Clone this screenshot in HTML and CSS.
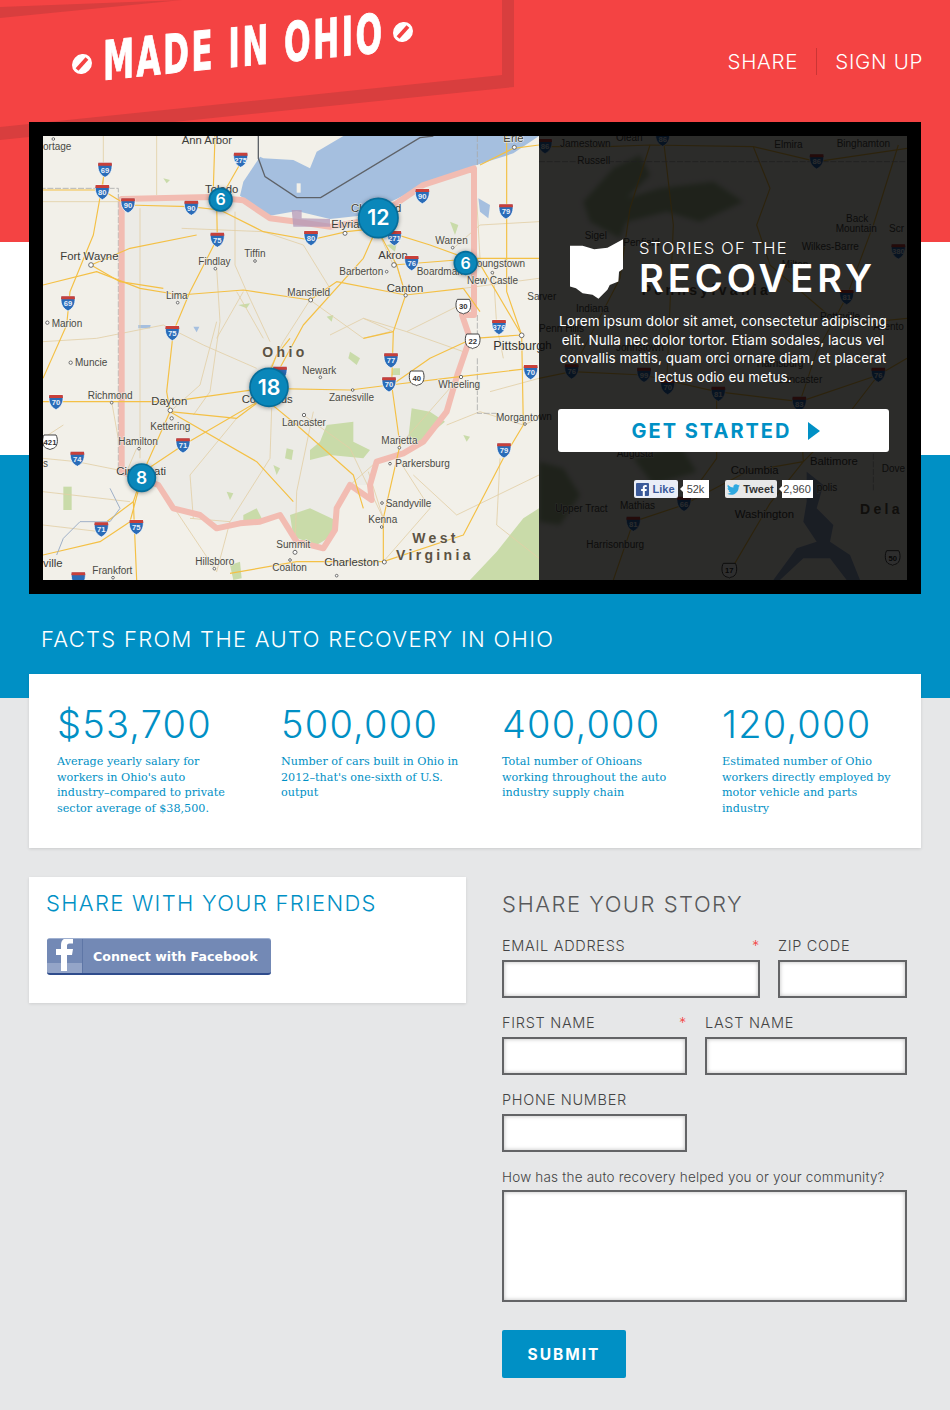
FILE: index.html
```html
<!DOCTYPE html>
<html>
<head>
	<title>Made in Ohio</title>
	<link rel="stylesheet" href="styles.css">
</head>
<body>
<div class="page">

<svg class="ribbon" viewBox="0 0 520 145" width="520" height="145" aria-hidden="true">
  <polygon points="0,7 182,0 0,18" class="ribbon-band"/>
  <polygon points="502,0 514,0 514,87 0,140 0,127 502,75" class="ribbon-band"/>
</svg>

<header class="header">
  <div class="logo">
    <span class="logo-dot"></span>
    <span class="logo-text">MADE IN OHIO</span>
    <span class="logo-dot"></span>
  </div>
  <nav class="nav">
    <a href="#">SHARE</a>
    <span class="nav-sep"></span>
    <a href="#">SIGN UP</a>
  </nav>
</header>

<section class="hero">
  <div class="map">
    <svg viewBox="39 33 1488 1332" width="496" height="444">
      <defs>
        <g id="is">
          <path d="M-20,-20 H20 C23,-4 20,14 0,24 C-20,14 -23,-4 -20,-20 Z" fill="#2a6cb8" stroke="#fff" stroke-width="2"/>
          <path d="M-20,-20 H20 L21,-11 H-21 Z" fill="#c8403a"/>
        </g>
        <g id="us">
          <path d="M-18,-20 H18 C24,-10 24,10 14,18 C8,22 3,21 0,24 C-3,21 -8,22 -14,18 C-24,10 -24,-10 -18,-20 Z" fill="#fff" stroke="#444" stroke-width="3"/>
        </g>
      </defs>
      <rect x="39" y="33" width="1488" height="1332" fill="#f2f0e9"/>
      <path d="M275,1040 V222 L540,216 L640,226 L720,280 L800,290 L900,305 L990,290 L1100,235 L1180,180 L1332,130 V570 H1296 L1320,640 L1282,750 L1250,860 L1180,950 L1120,985 L1040,1010 L1020,1080 L960,1080 L920,1150 L915,1215 L880,1270 L800,1250 L750,1170 L690,1190 L630,1195 L560,1210 L510,1170 L430,1150 L385,1080 Z" fill="#ecebe6"/>

      <g class="parks">
        <polygon points="890,900 970,890 970,950 1020,975 1000,1000 900,990 840,1005 840,975 870,950"/>
        <polygon points="780,1170 840,1150 915,1185 910,1230 860,1260 790,1235"/>
        <polygon points="640,1170 680,1150 700,1190 640,1200"/>
        <polygon points="1145,850 1200,860 1245,890 1160,960 1135,940"/>
        <polygon points="100,1085 125,1085 125,1155 100,1155"/>
        <polygon points="1320,1365 1400,1280 1480,1180 1527,1150 1527,1365"/>
        <polygon points="960,680 990,700 980,720 955,700"/>
        <polygon points="1090,730 1110,730 1110,750 1085,750"/>
        <polygon points="600,1320 630,1310 635,1360 610,1365"/>
        <polygon points="625,540 660,535 650,550"/>
        <polygon points="890,575 910,570 905,590"/>
        <polygon points="1260,290 1285,300 1275,330"/>
        <polygon points="1070,360 1100,355 1095,380"/>
        <polygon points="770,970 790,975 785,1005 765,1000"/>
        <polygon points="590,1100 610,1105 600,1125"/>
        <polygon points="730,1020 750,1030 740,1050"/>
        <polygon points="400,160 420,165 410,175"/>
        <polygon points="1300,930 1320,935 1310,950"/>
      </g>

      <polygon class="water" points="690,95 640,170 630,212 720,272 800,258 900,282 990,272 1100,222 1200,170 1340,120 1450,85 1527,33 940,33 860,80 840,130 790,105 700,100"/>
      <polygon class="water" points="325,600 362,600 360,610 325,610"/>
      <polygon class="water" points="490,605 508,605 500,622"/>
      <polygon class="water" points="1345,220 1380,240 1375,280 1350,260"/>
      <rect x="800" y="175" width="12" height="28" fill="#f2f0e9"/>

      <g class="road-minor">
        <path d="M220,33 V190 M380,33 V210 M330,250 V1000 M39,230 H270 M615,260 V420 L650,500 L720,650"/>
        <path d="M455,310 L700,320 L820,360 L900,490 M560,430 L570,590 L540,800 L490,870"/>
        <path d="M39,650 L200,640 L400,600 L520,660 L680,730 M700,640 L620,500 M840,525 L760,650 L720,730"/>
        <path d="M900,630 L1000,580 L1130,620 L1290,540 M1000,580 L1090,620 M820,870 L960,970 L1060,1180 M725,850 L720,1000 L600,1190 L480,1180"/>
        <path d="M420,860 L510,780 L560,590 M320,970 L290,1040 M620,880 L480,1050 L490,1180 M245,830 L270,970 M100,900 L39,940"/>
        <path d="M1340,220 L1350,400 M1390,440 L1400,600 L1420,700 M1250,900 L1350,860 L1480,900 M1480,900 L1527,880 M1110,960 L1290,755"/>
        <path d="M1090,420 L1040,310 M1100,420 L1127,510 M1270,370 L1350,300 L1527,290 M1300,490 L1527,460 M1060,1180 L1015,1040"/>
        <path d="M39,1000 L140,1010 L290,1040 M39,1100 L300,1130 M39,1200 L210,1220 M400,1100 L560,1340 M600,1190 L560,1340 M850,860 L800,1100 L795,1280"/>
        <path d="M840,525 L1000,640 L1080,620 M1130,620 L1300,680 M640,500 L560,640 M1150,1050 L1280,1170 L1527,1050 M1380,800 L1527,760"/>
        <path d="M1040,1010 L960,1080 M1110,1010 L1200,1150 L1060,1310 M1410,1000 L1400,1200 L1527,1300"/>
      </g>

      <g class="state-line">
        <path d="M265,1030 V190 H39 M1342,33 V120 M1342,570 V640 M1342,700 V865 H1400"/>
      </g>
      <path class="ohio-border" d="M275,1040 V222 L540,216 L640,226 L720,280 L800,290 L900,305 L990,290 L1100,235 L1180,180 L1332,130 V570 H1296 L1320,640 L1282,750 L1250,860 L1180,950 L1120,985 L1040,1010 L1020,1080 L1025,1125 L960,1080 L920,1150 L915,1215 L880,1270 L800,1250 L750,1170 L690,1190 L630,1195 L560,1210 L510,1170 L430,1150 L385,1080 Z"/>
      <path d="M785,255 H815 V280 L900,282 V305 H790 Z" fill="#b49ab8" opacity=".75"/>

      <g class="road">
        <path d="M39,195 H217 L290,240 L480,245 L570,255 L700,320 L840,345 L950,320 L1040,310 L1200,360 L1310,400 H1527"/>
        <path d="M640,100 L560,240 L562,340 L480,500 L430,620 L410,800 L420,860 L340,1040 L310,1130 L320,1365"/>
        <path d="M39,830 H420 L700,790 L960,795 L1080,780 L1290,755 L1500,730"/>
        <path d="M340,1040 L460,960 L700,820 L820,600 L1000,400 L1040,310"/>
        <path d="M1127,510 L1090,620 L1085,780 L1110,960 L1060,1180 L1060,1310"/>
        <path d="M39,480 L200,440 L330,490 L450,510 L640,495 L840,525 L920,470 L1127,510 L1300,490"/>
        <path d="M225,133 L190,330 L120,500 L110,600 L39,760"/>
        <path d="M1430,33 V500 L1475,630 L1480,900 L1420,1000 L1300,1230 L1060,1310 L800,1310 L600,1345"/>
        <path d="M1090,420 L1280,405 M1340,400 L1475,630 L1330,640 L1200,700 L1085,780"/>
        <path d="M715,830 L800,900 L970,1050 L1000,1150 M420,860 L680,1010 L790,1130 M183,420 L270,470 L400,490 M183,420 L300,370 L500,330"/>
        <path d="M340,1040 L300,1190 L210,1250 L39,1290 M310,1130 L230,1190 M555,33 L550,190 M1527,60 L1450,70 L1350,120"/>
        <path d="M700,790 L740,690 L780,640 M420,860 L620,880 L700,820 M1000,640 L1090,620 M1300,490 L1350,560 M1040,310 L1100,420 L1127,510"/>
      </g>
      <path d="M240,1090 L270,1150 L240,1190 L150,1190 L100,1240 L80,1290" fill="none" stroke="#9fb0c8" stroke-width="3"/>
      <path class="border-line" d="M685,33 V100 L705,155 L800,218 H872 L1170,38 L1210,33"/>

      <g class="lbl">
        <text x="455" y="56" class="lbl-lg">Ann Arbor</text><text x="39" y="75">ortage</text><text x="1420" y="52" class="lbl-lg">Erie</text>
        <text x="525" y="205" class="lbl-lg">Toledo</text><text x="963" y="260" class="lbl-lg">Cleveland</text><text x="904" y="310" class="lbl-lg">Elyria</text>
        <text x="1216" y="356">Warren</text><text x="91" y="404" class="lbl-lg">Fort Wayne</text><text x="643" y="397">Tiffin</text><text x="505" y="419">Findlay</text>
        <text x="1045" y="403" class="lbl-lg">Akron</text><text x="928" y="451">Barberton</text><text x="1160" y="449">Boardman</text><text x="1340" y="425">oungstown</text><text x="1311" y="476">New Castle</text>
        <text x="1070" y="500" class="lbl-lg">Canton</text><text x="772" y="513">Mansfield</text><text x="408" y="521">Lima</text><text x="1492" y="524">Sarv</text><text x="65" y="605">Marion</text>
        <text x="1390" y="675" class="lbl-xl">Pittsburgh</text><text x="135" y="723">Muncie</text><text x="817" y="746">Newark</text>
        <text x="697" y="696" class="region">Ohio</text><text x="173" y="822">Richmond</text><text x="364" y="840" class="lbl-lg">Dayton</text><text x="897" y="828">Zanesville</text>
        <text x="635" y="833" class="lbl-lg">Columbus</text><text x="1225" y="790">Wheeling</text><text x="1398" y="887">Morgantown</text><text x="756" y="903">Lancaster</text>
        <text x="361" y="914">Kettering</text><text x="265" y="960">Hamilton</text><text x="1054" y="958">Marietta</text><text x="1096" y="1027">Parkersburg</text>
        <text x="259" y="1049" class="lbl-lg">Cincinnati</text><text x="39" y="1027">s</text><text x="1067" y="1145">Sandyville</text><text x="1015" y="1195">Kenna</text>
        <text x="1147" y="1254" class="region">West</text><text x="1098" y="1306" class="region">Virginia</text>
        <text x="739" y="1270">Summit</text><text x="496" y="1319">Hillsboro</text><text x="727" y="1339">Coalton</text><text x="883" y="1323" class="lbl-lg">Charleston</text>
        <text x="187" y="1347">Frankfort</text><text x="39" y="1325" class="lbl-lg">ville</text>
      </g>

      <g class="towns">
        <circle cx="183" cy="420" r="7"/><circle cx="52" cy="593" r="5"/><circle cx="122" cy="713" r="5"/><circle cx="245" cy="833" r="4"/><circle cx="421" cy="856" r="7"/><circle cx="425" cy="880" r="5"/><circle cx="327" cy="971" r="4"/>
        <circle cx="556" cy="431" r="4"/><circle cx="675" cy="408" r="4"/><circle cx="443" cy="533" r="4"/><circle cx="842" cy="525" r="6"/><circle cx="945" cy="325" r="6"/><circle cx="1092" cy="420" r="7"/><circle cx="1070" cy="440" r="4"/>
        <circle cx="1127" cy="511" r="5"/><circle cx="1268" cy="368" r="4"/><circle cx="1387" cy="443" r="4"/><circle cx="1475" cy="631" r="7"/><circle cx="871" cy="757" r="4"/><circle cx="968" cy="795" r="4"/><circle cx="822" cy="870" r="5"/>
        <circle cx="1293" cy="756" r="5"/><circle cx="1485" cy="897" r="4"/><circle cx="1108" cy="968" r="4"/><circle cx="1080" cy="1016" r="4"/><circle cx="1056" cy="1134" r="4"/><circle cx="1055" cy="1206" r="4"/><circle cx="795" cy="1282" r="6"/>
        <circle cx="780" cy="1305" r="4"/><circle cx="1063" cy="1311" r="6"/><circle cx="553" cy="1331" r="4"/><circle cx="920" cy="1352" r="4"/><circle cx="249" cy="1358" r="4"/><circle cx="1453" cy="67" r="6"/><circle cx="70" cy="42" r="4"/>
      </g>

      <g class="shield-num">
        <use href="#is" x="225" y="133"/><text x="225" y="143">69</text>
        <use href="#is" x="632" y="103"/><text x="632" y="113">275</text>
        <use href="#is" x="217" y="200"/><text x="217" y="210">80</text>
        <use href="#is" x="294" y="240"/><text x="294" y="250">90</text>
        <use href="#is" x="484" y="247"/><text x="484" y="257">90</text>
        <use href="#is" x="562" y="343"/><text x="562" y="353">75</text>
        <use href="#is" x="114" y="534"/><text x="114" y="544">69</text>
        <use href="#is" x="427" y="623"/><text x="427" y="633">75</text>
        <use href="#is" x="843" y="338"/><text x="843" y="348">80</text>
        <use href="#is" x="1177" y="212"/><text x="1177" y="222">90</text>
        <use href="#is" x="1428" y="258"/><text x="1428" y="268">79</text>
        <use href="#is" x="1145" y="413"/><text x="1145" y="423">76</text>
        <use href="#is" x="1093" y="338"/><text x="1093" y="348">271</text>
        <use href="#is" x="1407" y="605"/><text x="1407" y="615">376</text>
        <use href="#is" x="1083" y="705"/><text x="1083" y="715">77</text>
        <use href="#is" x="1077" y="777"/><text x="1077" y="787">70</text>
        <use href="#is" x="1502" y="740"/><text x="1502" y="750">70</text>
        <use href="#is" x="78" y="830"/><text x="78" y="840">70</text>
        <use href="#is" x="459" y="960"/><text x="459" y="970">71</text>
        <use href="#is" x="142" y="1000"/><text x="142" y="1010">74</text>
        <use href="#is" x="214" y="1212"/><text x="214" y="1222">71</text>
        <use href="#is" x="319" y="1205"/><text x="319" y="1215">75</text>
        <use href="#is" x="1422" y="975"/><text x="1422" y="985">79</text>
        <use href="#is" x="145" y="1362"/>
        <use href="#is" x="750" y="745"/>
      </g>
      <g class="shield-us">
        <use href="#us" x="1300" y="543"/><text x="1300" y="553">30</text>
        <use href="#us" x="1328" y="647"/><text x="1328" y="657">22</text>
        <use href="#us" x="1160" y="758"/><text x="1160" y="768">40</text>
        <use href="#us" x="60" y="950"/><text x="60" y="960">421</text>
      </g>

      <g class="cluster">
        <circle cx="572" cy="224" r="34"/><text x="572" y="241" class="cluster-sm">6</text>
        <circle cx="1045" cy="279" r="59"/><text x="1045" y="301">12</text>
        <circle cx="1307" cy="414" r="34"/><text x="1307" y="431" class="cluster-sm">6</text>
        <circle cx="717" cy="787" r="57"/><text x="717" y="809">18</text>
        <circle cx="335" cy="1058" r="41"/><text x="335" y="1076" class="cluster-md">8</text>
      </g>
    </svg>
  </div>

  <div class="intro">
    <svg class="intro-map" viewBox="-3 33 1104 1332" width="368" height="444" aria-hidden="true">
      <rect x="-3" y="33" width="1104" height="1332" fill="#f2f0e9"/>
      <g class="forest">
        <polygon points="130,230 220,130 300,90 330,150 260,220 360,190 520,170 610,230 480,290 380,260 260,290 240,340 150,290"/>
        <polygon points="-3,1010 70,1030 120,1110 60,1200 -3,1190"/>
        <polygon points="280,1000 420,960 470,1040 340,1080"/>
      </g>
      <path class="water-dark" d="M800,1040 L850,1080 L830,1150 L880,1200 L870,1250 L930,1290 L960,1365 L920,1365 L870,1300 L790,1300 L720,1365 L700,1365 L770,1270 L830,1250 L790,1190 L800,1130 Z"/>
      <g class="road">
        <path d="M-3,65 H200 L330,60 L640,65 L830,110 L1101,70 M640,65 L690,190 L650,300 L690,420 L900,600 L1101,580"/>
        <path d="M330,60 L270,250 L240,460 L95,740 M95,740 L-3,760 M95,740 L310,750 L530,800 L780,830 L1015,750 L1101,700"/>
        <path d="M530,800 L530,1000 L430,1140 L280,1190 L220,1365 M780,830 L790,1010 L690,1135 L570,1340 M1015,750 L900,900 L790,1010 L620,1040 L430,1140"/>
        <path d="M920,515 L830,680 L780,830 M920,515 L1000,300 L1075,60 M370,40 L400,300 L380,780"/>
      </g>
      <path class="state-line" d="M-3,110 H1101 M1000,940 V1100"/>
      <g class="lbl">
        <text x="60" y="66">Jamestown</text><text x="228" y="48">Olean</text><text x="112" y="118">Russell</text><text x="703" y="70">Elmira</text><text x="890" y="67">Binghamton</text>
        <text x="918" y="290">Back</text><text x="887" y="322">Mountain</text><text x="1047" y="320">Scr</text><text x="785" y="375">Wilkes-Barre</text><text x="134" y="342">Sigel</text><text x="-3" y="524">rver</text><text x="108" y="560">Indiana</text>
        <text x="-3" y="622">Penn Hills</text><text x="228" y="678">Johnstown</text><text x="-3" y="672" class="lbl-lg">gh</text><text x="650" y="725">Harrisburg</text><text x="715" y="775">Lancaster</text><text x="1000" y="615">Allento</text><text x="840" y="585">Pottsville</text>
        <text x="725" y="430">Milton</text><text x="250" y="362">Penfield</text><text x="305" y="510" class="region">Pennsylvania</text><text x="-3" y="885">wn</text><text x="230" y="995">Augusta</text>
        <text x="810" y="1019" class="lbl-lg">Baltimore</text><text x="572" y="1046" class="lbl-lg">Columbia</text><text x="1025" y="1040">Dove</text><text x="830" y="1098">polis</text><text x="46" y="1160">Upper Tract</text><text x="240" y="1153">Mathias</text>
        <text x="584" y="1180" class="lbl-lg">Washington</text><text x="960" y="1167" class="region">Dela</text><text x="139" y="1270">Harrisonburg</text>
      </g>
      <g class="shield-num">
        <use href="#is" x="15" y="62"/><text x="15" y="72">86</text>
        <use href="#is" x="368" y="40"/><text x="368" y="50">86</text>
        <use href="#is" x="830" y="108"/><text x="830" y="118">86</text>
        <use href="#is" x="920" y="515"/><text x="920" y="525">81</text>
        <use href="#is" x="1075" y="378"/><text x="1075" y="388">380</text>
        <use href="#is" x="95" y="738"/><text x="95" y="748">76</text>
        <use href="#is" x="312" y="748"/><text x="312" y="758">99</text>
        <use href="#is" x="383" y="785"/><text x="383" y="795">70</text>
        <use href="#is" x="535" y="805"/><text x="535" y="815">81</text>
        <use href="#is" x="778" y="835"/><text x="778" y="845">83</text>
        <use href="#is" x="1015" y="748"/><text x="1015" y="758">76</text>
        <use href="#is" x="280" y="1195"/><text x="280" y="1205">81</text>
        <use href="#is" x="432" y="1135"/><text x="432" y="1145">66</text>
      </g>
      <g class="shield-us">
        <use href="#us" x="1058" y="1297"/><text x="1058" y="1307">50</text>
        <use href="#us" x="568" y="1335"/><text x="568" y="1345">17</text>
      </g>
    </svg>

    <div class="intro-body">
      <div class="intro-title">
        <svg class="ohio-icon" viewBox="92 342 160 180" width="53" height="60" aria-hidden="true">
          <path d="M92,362 L130,362 L165,372 L205,368 L252,342 V432 L240,440 L238,470 L212,480 L205,495 L178,522 L160,510 L130,505 L110,490 L92,485 Z" fill="#fff"/>
        </svg>
        <div>
          <div class="title-small">STORIES OF THE</div>
          <div class="title-big">RECOVERY</div>
        </div>
      </div>
      <p class="intro-text">Lorem ipsum dolor sit amet, consectetur adipiscing<br>elit. Nulla nec dolor tortor. Etiam sodales, lacus vel<br>convallis mattis, quam orci ornare diam, et placerat<br>lectus odio eu metus.</p>
      <a class="start-btn" href="#">GET STARTED <span class="start-arrow"></span></a>
      <div class="social">
        <span class="soc-btn soc-like">
          <svg viewBox="0 0 14 14" width="13" height="13" aria-hidden="true"><rect width="14" height="14" rx="1" fill="#3b5a9a"/><path d="M9.5,14 V8.6 H11.3 L11.6,6.5 H9.5 V5.2 C9.5,4.6 9.7,4.2 10.5,4.2 H11.6 V2.3 C11.4,2.3 10.7,2.2 10,2.2 C8.4,2.2 7.3,3.2 7.3,4.9 V6.5 H5.5 V8.6 H7.3 V14 Z" fill="#fff"/></svg>
          Like
        </span>
        <span class="soc-count count-like">52k</span>
        <span class="soc-btn soc-tweet">
          <svg viewBox="0 0 24 24" width="13" height="13" aria-hidden="true"><path d="M23.95 4.57a10 10 0 0 1-2.82.77 4.96 4.96 0 0 0 2.16-2.72c-.95.55-2 .96-3.13 1.19a4.92 4.92 0 0 0-8.38 4.48C7.69 8.1 4.07 6.13 1.64 3.16a4.82 4.82 0 0 0-.67 2.48c0 1.71.87 3.21 2.19 4.1a4.9 4.9 0 0 1-2.23-.62v.06a4.92 4.92 0 0 0 3.95 4.83 5 5 0 0 1-2.21.08 4.94 4.94 0 0 0 4.6 3.42A9.87 9.87 0 0 1 0 19.54a14 14 0 0 0 7.56 2.21c9.05 0 14-7.5 14-13.98 0-.21 0-.42-.02-.63a9.94 9.94 0 0 0 2.41-2.57z" fill="#2fa9e0"/></svg>
          Tweet
        </span>
        <span class="soc-count count-tweet">2,960</span>
      </div>
    </div>
  </div>
</section>

<h2 class="facts-title">FACTS FROM THE AUTO RECOVERY IN OHIO</h2>

<section class="facts">
  <div class="fact">
    <div class="fact-num">$53,700</div>
    <p class="fact-text">Average yearly salary for<br>workers in Ohio's auto<br>industry–compared to private<br>sector average of $38,500.</p>
  </div>
  <div class="fact">
    <div class="fact-num">500,000</div>
    <p class="fact-text">Number of cars built in Ohio in<br>2012–that's one-sixth of U.S.<br>output</p>
  </div>
  <div class="fact">
    <div class="fact-num">400,000</div>
    <p class="fact-text">Total number of Ohioans<br>working throughout the auto<br>industry supply chain</p>
  </div>
  <div class="fact">
    <div class="fact-num">120,000</div>
    <p class="fact-text">Estimated number of Ohio<br>workers directly employed by<br>motor vehicle and parts<br>industry</p>
  </div>
</section>

<div class="lower">
  <section class="share-card">
    <h3 class="share-title">SHARE WITH YOUR FRIENDS</h3>
    <a class="fb-btn" href="#">
      <span class="fb-icon">
        <svg viewBox="0 0 24 36" width="24" height="36" aria-hidden="true"><path d="M8,34 V18 H3 V12 H8 V8 C8,3 11,1 15,1 H20 V6.500 H16.500 C14.500,6.500 14,7.500 14,9 V12 H20 L19,18 H14 V34 Z" fill="#fff"/></svg>
      </span>
      <span class="fb-label">Connect with Facebook</span>
    </a>
  </section>

  <form class="story">
    <h3 class="story-title">SHARE YOUR STORY</h3>
    <div class="form-row row-email">
      <label class="field"><span class="field-label">EMAIL ADDRESS <span class="req">*</span></span><input type="text"></label>
      <label class="field"><span class="field-label">ZIP CODE</span><input type="text"></label>
    </div>
    <div class="form-row row-name">
      <label class="field"><span class="field-label">FIRST NAME <span class="req">*</span></span><input type="text"></label>
      <label class="field"><span class="field-label">LAST NAME</span><input type="text"></label>
    </div>
    <div class="form-row row-name">
      <label class="field"><span class="field-label">PHONE NUMBER</span><input type="text"></label>
    </div>
    <label class="field field-story"><span class="field-question">How has the auto recovery helped you or your community?</span><textarea></textarea></label>
    <button class="submit" type="button">SUBMIT</button>
  </form>
</div>

</div>
</body>
</html>
```

FILE: styles.css
```css
html, body {
  margin: 0;
}

body {
  font-family: 'Inter', 'Liberation Sans', sans-serif;
  color: #58595b;
}

.page {
  position: relative;
  width: 950px;
  height: 1410px;
  overflow: hidden;
  background: linear-gradient(#f44343 0 242px, #fff 242px 455px, #0090c5 455px 698px, #e6e7e8 698px);
}

.ribbon {
  position: absolute;
  top: 0;
  left: 0;
}

.ribbon-band {
  fill: #d83e3e;
}

/* header */
.header {
  position: relative;
  display: flex;
  justify-content: space-between;
  height: 122px;
  padding: 0 27px 0 72px;
  box-sizing: border-box;
}

.logo {
  display: flex;
  align-items: center;
  gap: 11px;
  height: 40px;
  margin-top: 45px;
  transform: skewY(-5.7deg);
  transform-origin: 0 50%;
}

.logo-dot {
  position: relative;
  width: 20px;
  height: 20px;
  border-radius: 50%;
  background: #fff;
}

.logo-dot::after {
  content: "";
  position: absolute;
  top: 8px;
  left: 3px;
  width: 14px;
  height: 4px;
  background: #f44343;
  transform: rotate(-45deg);
}

.logo-text {
  display: block;
  width: 279px;
  font-family: 'DejaVu Sans', sans-serif;
  font-weight: bold;
  font-size: 54px;
  line-height: 40px;
  letter-spacing: 4px;
  white-space: nowrap;
  color: #fff;
  -webkit-text-stroke: 1px #fff;
  transform: scaleX(.58);
  transform-origin: 0 50%;
}

.nav {
  display: flex;
  align-items: center;
  height: 27px;
  margin-top: 48px;
}

.nav a {
  font-size: 20.500px;
  font-weight: 300;
  letter-spacing: .7px;
  color: #fff;
  text-decoration: none;
}

.nav-sep {
  width: 1px;
  height: 27px;
  margin: 0 18px;
  background: #cb3535;
}

/* map + intro */
.hero {
  position: relative;
  display: flex;
  width: 864px;
  height: 444px;
  margin-left: 29px;
  border: 14px solid #000;
  background: #000;
}

.map, .intro {
  position: relative;
  height: 444px;
  overflow: hidden;
}

.map {
  width: 496px;
}

.map svg, .intro-map {
  display: block;
}

.parks {
  fill: #c9dba9;
  filter: blur(.6px);
}

.water {
  fill: #a5bfdf;
}

.water-dark {
  fill: #8fa5c9;
}

.forest {
  fill: #a9bd94;
  filter: blur(8px);
}

.road, .road-minor, .state-line, .border-line, .ohio-border {
  fill: none;
}

.road path {
  stroke: #f4c045;
  stroke-width: 3.5;
  stroke-linejoin: round;
}

.road-minor path {
  stroke: #e2cfa6;
  stroke-width: 2.500;
}

.state-line, .state-line path {
  stroke: #a9a9a9;
  stroke-width: 2.500;
  stroke-dasharray: 18 5;
}

.border-line {
  stroke: #5e6268;
  stroke-width: 4;
}

.ohio-border {
  stroke: #f2bcb2;
  stroke-width: 18;
  stroke-linejoin: round;
}

.lbl text {
  font-family: 'Liberation Sans', sans-serif;
  font-size: 30px;
  fill: #4a4a44;
  stroke: #f2f0e9;
  stroke-width: 3px;
  paint-order: stroke;
}

.lbl .lbl-lg {
  font-size: 34px;
  fill: #3c3c38;
}

.lbl .lbl-xl {
  font-size: 38px;
  fill: #33332f;
}

.lbl .region {
  font-size: 42px;
  font-weight: bold;
  letter-spacing: 10px;
  fill: #5c5344;
}

.towns circle {
  fill: #fff;
  stroke: #555;
  stroke-width: 2.500;
}

.shield-num text, .shield-us text {
  font-family: 'Liberation Sans', sans-serif;
  font-size: 23px;
  font-weight: bold;
  text-anchor: middle;
}

.shield-num text {
  fill: #e8effa;
}

.shield-us text {
  fill: #333;
}

.cluster circle {
  fill: #0a87ba;
  stroke: #056d9a;
  stroke-width: 5;
  filter: drop-shadow(0 2px 6px rgba(0, 0, 0, .4));
}

.cluster text {
  font-family: 'Inter', sans-serif;
  font-size: 64px;
  font-weight: 600;
  fill: #fff;
  text-anchor: middle;
}

.cluster .cluster-sm {
  font-size: 48px;
}

.cluster .cluster-md {
  font-size: 52px;
}

.intro {
  width: 368px;
}

.intro-map {
  position: absolute;
  top: 0;
  left: 0;
}

.intro::after {
  content: "";
  position: absolute;
  top: 0;
  left: 0;
  right: 0;
  bottom: 0;
  background: rgba(0, 0, 0, .82);
}

.intro-body {
  position: relative;
  z-index: 1;
  display: flex;
  flex-direction: column;
  align-items: center;
  padding-top: 103px;
  color: #fff;
}

.intro-title {
  display: flex;
  gap: 16px;
}

.title-small {
  font-size: 16.500px;
  font-weight: 300;
  line-height: 18px;
  letter-spacing: 1.200px;
}

.title-big {
  margin-top: 2px;
  font-size: 38px;
  font-weight: 600;
  line-height: 38px;
  letter-spacing: 4px;
}

.intro-text {
  margin: 13px 0 0;
  font-size: 13.500px;
  line-height: 18.500px;
  letter-spacing: .04px;
  text-align: center;
  white-space: nowrap;
}

.start-btn {
  display: flex;
  justify-content: center;
  align-items: center;
  gap: 17px;
  width: 331px;
  height: 43px;
  margin-top: 23px;
  padding-left: 6px;
  box-sizing: border-box;
  border-radius: 3px;
  background: #fff;
  font-size: 20px;
  font-weight: 700;
  letter-spacing: 2px;
  color: #0090c5;
  text-decoration: none;
}

.start-arrow {
  width: 0;
  height: 0;
  border-left: 12px solid #0090c5;
  border-top: 9px solid transparent;
  border-bottom: 9px solid transparent;
}

.social {
  display: flex;
  align-items: center;
  margin-top: 28px;
  font-family: 'Liberation Sans', sans-serif;
  font-size: 11px;
}

.soc-btn {
  display: flex;
  align-items: center;
  justify-content: center;
  gap: 3px;
  height: 18px;
  border-radius: 2px;
  font-weight: bold;
}

.soc-like {
  width: 44px;
  background: #e9edf7;
  color: #3b5a9a;
}

.soc-tweet {
  width: 52px;
  margin-left: 16px;
  background: #e8e8e8;
  color: #333;
}

.soc-count {
  position: relative;
  height: 18px;
  margin-left: 5px;
  background: #fff;
  line-height: 18px;
  text-align: center;
  color: #444;
}

.count-like {
  width: 26px;
}

.count-tweet {
  width: 31px;
}

.soc-count::before {
  content: "";
  position: absolute;
  top: 6px;
  left: -3px;
  border-right: 3px solid #fff;
  border-top: 3px solid transparent;
  border-bottom: 3px solid transparent;
}

/* facts */
.facts-title {
  margin: 0;
  padding: 32px 0 22px 41px;
  font-size: 22px;
  font-weight: 300;
  line-height: 26px;
  letter-spacing: 1.300px;
  color: #fff;
}

.facts {
  position: relative;
  display: grid;
  grid-template-columns: 224px 221px 220px 1fr;
  width: 892px;
  margin-left: 29px;
  padding: 30px 0 32px 28px;
  box-sizing: border-box;
  background: #fff;
  box-shadow: 0 1px 3px rgba(0, 0, 0, .12);
  color: #0090c5;
}

.fact-num {
  font-size: 38px;
  font-weight: 300;
  line-height: 40px;
  letter-spacing: 1.200px;
}

.fact-text {
  margin: 10px 0 0;
  font-family: 'DejaVu Serif', 'Liberation Serif', serif;
  font-size: 11.200px;
  line-height: 15.500px;
  white-space: nowrap;
}

/* share + form */
.lower {
  display: flex;
  align-items: flex-start;
  gap: 36px;
  margin: 29px 0 0 29px;
}

.share-card {
  width: 437px;
  padding: 13px 18px 28px 17px;
  box-sizing: border-box;
  background: #fff;
  box-shadow: 0 1px 3px rgba(0, 0, 0, .1);
}

.share-title {
  margin: 0;
  font-size: 22px;
  font-weight: 300;
  line-height: 26px;
  letter-spacing: 1.300px;
  color: #0090c5;
}

.fb-btn {
  display: flex;
  width: 224px;
  height: 37px;
  margin: 22px 0 0 1px;
  box-sizing: border-box;
  border-top: 1px solid #9fb0d0;
  border-bottom: 2px solid #2f4c8c;
  border-radius: 3px;
  background: #7389b5;
  color: #fff;
  text-decoration: none;
  overflow: hidden;
}

.fb-icon {
  display: flex;
  justify-content: center;
  align-items: flex-end;
  width: 35px;
  border-right: 1px solid #5e76a6;
  background: linear-gradient(#7389b5 0 24px, #94a5c8 24px);
}

.fb-label {
  padding-left: 10px;
  font-family: 'DejaVu Sans', sans-serif;
  font-size: 12.600px;
  font-weight: bold;
  line-height: 35px;
  white-space: nowrap;
}

.story {
  width: 405px;
  padding-top: 14px;
}

.story-title {
  margin: 0 0 20px;
  font-size: 22px;
  font-weight: 300;
  line-height: 26px;
  letter-spacing: 1.500px;
  color: #58595b;
}

.form-row {
  display: grid;
  gap: 18px;
  margin-bottom: 16px;
}

.row-email {
  grid-template-columns: 258px 129px;
}

.row-name {
  grid-template-columns: 185px 202px;
}

.field {
  display: block;
}

.field-label {
  display: flex;
  justify-content: space-between;
  height: 18px;
  margin-bottom: 5px;
  font-size: 14.500px;
  font-weight: 300;
  line-height: 18px;
  letter-spacing: .7px;
  color: #444;
}

.req {
  color: #f44343;
}

.field input, .field textarea {
  display: block;
  width: 100%;
  height: 38px;
  padding: 0;
  box-sizing: border-box;
  border: 2px solid #636466;
  border-radius: 0;
  background: #fff;
  box-shadow: inset 0 0 4px #bbb;
  resize: none;
}

.field-question {
  display: block;
  margin-bottom: 4px;
  font-size: 13.500px;
  font-weight: 300;
  line-height: 18px;
  letter-spacing: .2px;
  color: #444;
}

.field textarea {
  height: 112px;
}

.submit {
  display: block;
  width: 124px;
  height: 48px;
  margin-top: 28px;
  border: 0;
  border-radius: 2px;
  background: #0090c5;
  font-family: 'Inter', sans-serif;
  font-size: 15.500px;
  font-weight: 700;
  letter-spacing: 2px;
  color: #fff;
}
```
